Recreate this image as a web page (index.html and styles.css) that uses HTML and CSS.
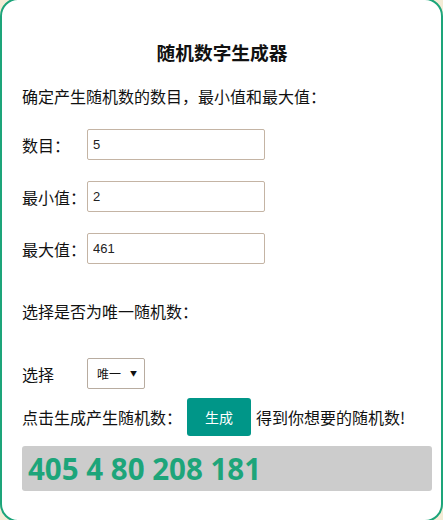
FILE: index.html
```html
<!DOCTYPE html>
<html lang="zh-CN">
<head>
<meta charset="utf-8">
<title>随机数字生成器</title>
<link rel="stylesheet" href="styles.css">
</head>
<body>
<div class="card">
  <h3 class="title">随机数字生成器</h3>
  <p class="intro">确定产生随机数的数目，最小值和最大值：</p>
  <div class="row first">
    <span class="label">数目：</span>
    <input class="field" type="text" value="5">
  </div>
  <div class="row">
    <span class="label">最小值：</span>
    <input class="field" type="text" value="2">
  </div>
  <div class="row">
    <span class="label">最大值：</span>
    <input class="field" type="text" value="461">
  </div>
  <p class="intro second">选择是否为唯一随机数：</p>
  <div class="row select-row">
    <span class="label">选择</span>
    <div class="select-wrap">
      <select class="select">
        <option>唯一</option>
        <option>不唯一</option>
      </select>
      <span class="arrow">▼</span>
    </div>
  </div>
  <div class="action-row">
    <span>点击生成产生随机数：</span>
    <button class="btn" type="button">生成</button>
    <span>得到你想要的随机数!</span>
  </div>
  <div class="result">405 4 80 208 181</div>
</div>
</body>
</html>
```
FILE: styles.css
```css
html, body {
  margin: 0;
  padding: 0;
}
body {
  background: #f4ecd6;
  font-family: "Noto Sans CJK SC", "Noto Sans", sans-serif;
  color: #111;
  overflow: hidden;
}
.card {
  box-sizing: border-box;
  width: 443px;
  height: 524px;
  margin-top: -2px;
  border: 2px solid #1da57a;
  border-radius: 18px;
  background: #fff;
  padding: 39px 9px 0 20px;
}
.title {
  margin: 0;
  font-size: 18.7px;
  line-height: 26px;
  font-weight: bold;
  text-align: center;
  padding-right: 10px;
}
.intro {
  margin: 19px 0 0;
  font-size: 16px;
  line-height: 24px;
}
.intro.second {
  margin-top: 35px;
}
.row {
  display: flex;
  align-items: center;
  height: 31px;
  margin-top: 21px;
  font-size: 16px;
}
.row.select-row {
  margin-top: 35px;
}
.label {
  width: 65px;
  flex: none;
}
.field {
  box-sizing: border-box;
  width: 178px;
  height: 31px;
  border: 1px solid #c4b4a4;
  border-radius: 2px;
  padding: 0 5px;
  font-family: "Liberation Sans", Arial, sans-serif;
  font-size: 13px;
  color: #222;
  outline: none;
}
.select-wrap {
  position: relative;
  width: 58px;
  height: 31px;
}
.select {
  appearance: none;
  -webkit-appearance: none;
  box-sizing: border-box;
  width: 58px;
  height: 31px;
  border: 1px solid #b8aca0;
  border-radius: 2px;
  background: #fff;
  padding: 0 0 0 9px;
  font-family: "Noto Sans CJK SC", sans-serif;
  font-size: 12px;
  color: #111;
}
.arrow {
  position: absolute;
  right: 8px;
  top: 10px;
  font-size: 7px;
  line-height: 10px;
  color: #111;
  pointer-events: none;
}
.action-row {
  display: flex;
  align-items: center;
  gap: 5px;
  margin-top: 9px;
  font-size: 16px;
}
.btn {
  width: 64px;
  height: 38px;
  border: none;
  border-radius: 3px;
  background: #009688;
  color: #fff;
  font-family: "Noto Sans CJK SC", sans-serif;
  font-size: 14px;
  padding: 0;
}
.result {
  margin-top: 10px;
  height: 45px;
  background: #cccccc;
  border-radius: 3px;
  padding-left: 6px;
  font-family: "Open Sans", "Noto Sans", sans-serif;
  font-weight: bold;
  font-size: 29.5px;
  line-height: 45px;
  color: #1da57a;
}
```
